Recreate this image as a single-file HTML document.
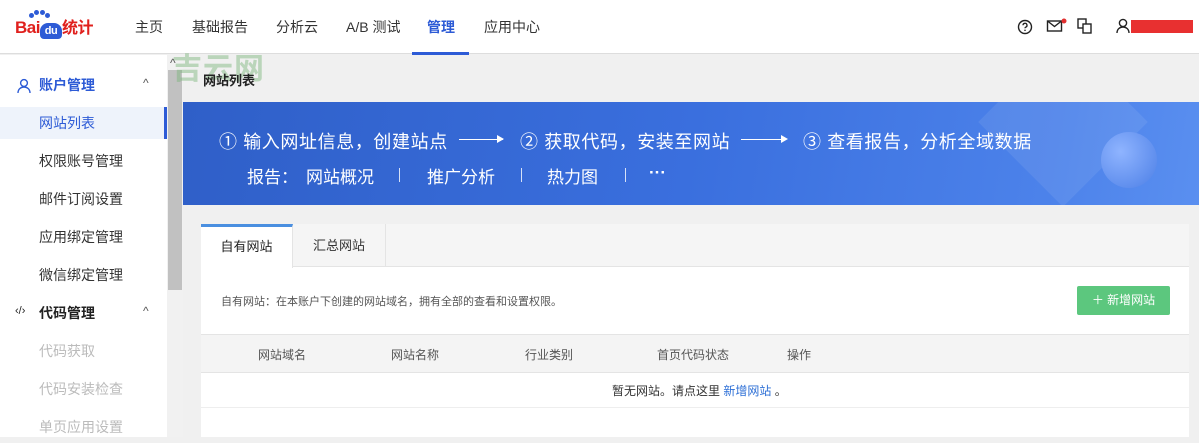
<!DOCTYPE html>
<html><head><meta charset="utf-8"><style>
*{margin:0;padding:0;box-sizing:border-box}
body{width:1199px;height:437px;overflow:hidden;background:#f0f0f0;font-family:"Liberation Sans","Noto Sans CJK SC",sans-serif;position:relative;color:#333}
.abs{position:absolute}
.hdr{left:0;top:0;width:1199px;height:54px;background:#fff;border-bottom:1px solid #ddd}
.nav{top:17px;font-size:14px;color:#333}
.side{left:0;top:55px;width:167px;height:382px;background:#fff}
.si{left:0;width:167px;height:32px;line-height:32px;font-size:14px;padding-left:39px;color:#333}
.grp{font-weight:bold;color:#222}
.dis{color:#bbb}
.b1{top:26px;font-size:18px;color:#fff;white-space:nowrap;letter-spacing:0.6px}
.b2{top:61px;font-size:17px;color:#fff;white-space:nowrap}
.arr{top:37px;height:1px;background:#fff}
</style></head><body>
<div class="abs hdr"></div>
<div class="abs" style="left:15px;top:14px;font-size:17px;font-weight:bold;color:#e0201d;letter-spacing:-0.5px">Bai<span style="display:inline-block;width:22px;height:16px;background:#2d5bd6;border-radius:8px 8px 4px 4px;color:#fff;font-size:11px;text-align:center;line-height:16px;vertical-align:-1px;position:relative">du</span><span style="font-size:16px">统计</span></div>
<div class="abs" style="left:25px;top:10px;width:30px;height:8px">
<span class="abs" style="left:4px;top:3px;width:5px;height:5px;border-radius:50%;background:#2d5bd6"></span><span class="abs" style="left:9px;top:0;width:5px;height:5px;border-radius:50%;background:#2d5bd6"></span><span class="abs" style="left:15px;top:0;width:5px;height:5px;border-radius:50%;background:#2d5bd6"></span><span class="abs" style="left:20px;top:3px;width:5px;height:5px;border-radius:50%;background:#2d5bd6"></span></div>
<div class="abs nav" style="left:135px">主页</div>
<div class="abs nav" style="left:192px">基础报告</div>
<div class="abs nav" style="left:276px">分析云</div>
<div class="abs nav" style="left:346px">A/B 测试</div>
<div class="abs nav" style="left:427px;color:#2d5bd6;font-weight:bold">管理</div>
<div class="abs" style="left:412px;top:52px;width:57px;height:3px;background:#2d5bd6"></div>
<div class="abs nav" style="left:484px">应用中心</div>
<svg class="abs" style="left:1016px;top:18px" width="18" height="18" viewBox="0 0 18 18"><circle cx="9" cy="9" r="6.5" fill="none" stroke="#222" stroke-width="1.4"/><path d="M7 7.3a2 2 0 1 1 2.6 1.9c-.5.2-.6.5-.6 1.1" fill="none" stroke="#222" stroke-width="1.3"/><circle cx="9" cy="12.3" r=".8" fill="#222"/></svg>
<svg class="abs" style="left:1046px;top:17px" width="22" height="18" viewBox="0 0 22 18"><rect x="1.5" y="4" width="14" height="10" fill="none" stroke="#222" stroke-width="1.4"/><path d="M1.5 4l7 5.5 7-5.5" fill="none" stroke="#222" stroke-width="1.4"/><circle cx="18" cy="4" r="2.5" fill="#e03030"/></svg>
<svg class="abs" style="left:1076px;top:17px" width="18" height="18" viewBox="0 0 18 18"><rect x="2" y="2" width="8" height="9" fill="none" stroke="#222" stroke-width="1.4"/><rect x="7" y="7" width="8" height="9" fill="#fff" stroke="#222" stroke-width="1.4"/></svg>
<svg class="abs" style="left:1115px;top:17px" width="16" height="18" viewBox="0 0 16 18"><circle cx="8" cy="6" r="3.6" fill="none" stroke="#222" stroke-width="1.4"/><path d="M2 16c0-4 3-6 6-6s6 2 6 6" fill="none" stroke="#222" stroke-width="1.4"/></svg>
<div class="abs" style="left:1131px;top:20px;width:62px;height:13px;background:#e83030"></div>

<div class="abs side"></div>
<div class="abs si grp" style="top:69px;color:#2d5bd6">账户管理</div>
<svg class="abs" style="left:16px;top:78px" width="16" height="16" viewBox="0 0 16 16"><circle cx="8" cy="5" r="3.4" fill="none" stroke="#2d5bd6" stroke-width="1.4"/><path d="M2 15c0-4 3-6 6-6s6 2 6 6" fill="none" stroke="#2d5bd6" stroke-width="1.4"/></svg>
<div class="abs" style="left:143px;top:76px;font-size:12px;color:#555">^</div>
<div class="abs" style="left:0;top:107px;width:167px;height:32px;background:#eef3fb"></div>
<div class="abs" style="left:164px;top:107px;width:3px;height:32px;background:#2d5bd6"></div>
<div class="abs si" style="top:107px;color:#2d5bd6;background:transparent">网站列表</div>
<div class="abs si" style="top:145px">权限账号管理</div>
<div class="abs si" style="top:183px">邮件订阅设置</div>
<div class="abs si" style="top:221px">应用绑定管理</div>
<div class="abs si" style="top:259px">微信绑定管理</div>
<div class="abs si grp" style="top:297px">代码管理</div>
<div class="abs" style="left:15px;top:305px;font-size:11px;color:#222">‹/›</div>
<div class="abs" style="left:143px;top:304px;font-size:12px;color:#555">^</div>
<div class="abs si dis" style="top:335px">代码获取</div>
<div class="abs si dis" style="top:373px">代码安装检查</div>
<div class="abs si dis" style="top:411px">单页应用设置</div>
<div class="abs" style="left:167px;top:55px;width:16px;height:382px;background:#f1f1f1"></div>
<div class="abs" style="left:168px;top:70px;width:14px;height:220px;background:#c1c1c1"></div>
<div class="abs" style="left:170px;top:56px;font-size:12px;color:#555">^</div>
<div class="abs" style="left:172px;top:44px;font-size:30px;color:rgba(120,180,120,.45);font-weight:bold;letter-spacing:1px">吉云网</div>

<div class="abs" style="left:203px;top:70px;font-size:13px;color:#222;font-weight:bold">网站列表</div>
<div class="abs" style="left:183px;top:102px;width:1016px;height:103px;background:linear-gradient(100deg,#2f5fc8 0%,#3a6fde 50%,#4c82ea 85%,#5a8ff0 100%);overflow:hidden">
<div class="abs" style="left:820px;top:-40px;width:120px;height:120px;background:rgba(255,255,255,.08);transform:rotate(45deg)"></div>
<div class="abs" style="left:918px;top:30px;width:56px;height:56px;border-radius:50%;background:radial-gradient(circle at 35% 35%,#8fb4ff,#4c7fe6)"></div>
<div class="abs b1" style="left:36px">① 输入网址信息，创建站点</div>
<div class="abs arr" style="left:276px;width:44px"></div><div class="abs" style="left:314px;top:33px;width:0;height:0;border-left:7px solid #fff;border-top:4px solid transparent;border-bottom:4px solid transparent"></div>
<div class="abs b1" style="left:337px">② 获取代码，安装至网站</div>
<div class="abs arr" style="left:558px;width:44px"></div><div class="abs" style="left:598px;top:33px;width:0;height:0;border-left:7px solid #fff;border-top:4px solid transparent;border-bottom:4px solid transparent"></div>
<div class="abs b1" style="left:620px">③ 查看报告，分析全域数据</div>
<div class="abs b2" style="left:64px">报告：</div>
<div class="abs b2" style="left:123px">网站概况</div>
<div class="abs" style="left:216px;top:66px;width:1px;height:14px;background:rgba(255,255,255,.8)"></div>
<div class="abs b2" style="left:244px">推广分析</div>
<div class="abs" style="left:338px;top:66px;width:1px;height:14px;background:rgba(255,255,255,.8)"></div>
<div class="abs b2" style="left:364px">热力图</div>
<div class="abs" style="left:442px;top:66px;width:1px;height:14px;background:rgba(255,255,255,.8)"></div>
<div class="abs b2" style="left:466px;font-weight:bold">···</div>
</div>

<div class="abs" style="left:201px;top:224px;width:988px;height:213px;background:#fff"></div>
<div class="abs" style="left:201px;top:224px;width:988px;height:43px;background:#f5f5f5;border-bottom:1px solid #e4e4e4"></div>
<div class="abs" style="left:201px;top:224px;width:92px;height:44px;background:#fff;border-top:3px solid #4a8fe0;border-right:1px solid #e4e4e4;font-size:13px;color:#222;text-align:center;line-height:40px">自有网站</div>
<div class="abs" style="left:293px;top:224px;width:93px;height:43px;border-right:1px solid #e4e4e4;font-size:13px;color:#333;text-align:center;line-height:43px">汇总网站</div>
<div class="abs" style="left:221px;top:293px;font-size:11px;color:#555">自有网站：在本账户下创建的网站域名，拥有全部的查看和设置权限。</div>
<div class="abs" style="left:1077px;top:286px;width:93px;height:29px;background:#5cc77e;border-radius:2px;color:#fff;font-size:12px;text-align:center;line-height:29px">＋ 新增网站</div>
<div class="abs" style="left:201px;top:334px;width:988px;height:39px;background:#f4f4f4;border-top:1px solid #e4e4e4;border-bottom:1px solid #e4e4e4"></div>
<div class="abs" style="left:258px;top:346px;font-size:12px;color:#555">网站域名</div>
<div class="abs" style="left:391px;top:346px;font-size:12px;color:#555">网站名称</div>
<div class="abs" style="left:525px;top:346px;font-size:12px;color:#555">行业类别</div>
<div class="abs" style="left:657px;top:346px;font-size:12px;color:#555">首页代码状态</div>
<div class="abs" style="left:787px;top:346px;font-size:12px;color:#555">操作</div>
<div class="abs" style="left:612px;top:382px;font-size:12px;color:#333">暂无网站。请点这里 <span style="color:#2d6fd6">新增网站</span> 。</div>
<div class="abs" style="left:201px;top:407px;width:988px;height:1px;background:#eee"></div>
</body></html>
